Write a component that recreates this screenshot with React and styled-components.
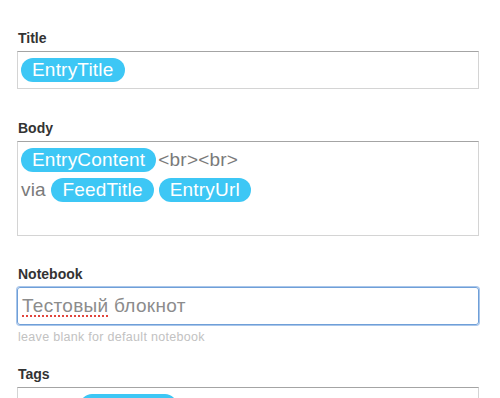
import React from "react";
import styled, { createGlobalStyle } from "styled-components";

const Global = createGlobalStyle`
  html, body { margin: 0; padding: 0; background: #fff; overflow: hidden; }
  body { font-family: "Liberation Sans", Arial, sans-serif; }
`;

const Page = styled.div`
  padding: 30px 21px 0 17px;
  display: flex;
  flex-direction: column;
`;

const Field = styled.div`
  display: flex;
  flex-direction: column;
  margin-bottom: ${(p) => p.$gap ?? 31}px;
`;

const Label = styled.div`
  font-size: 14px;
  line-height: 16px;
  font-weight: bold;
  color: #333;
  margin: 0 0 5px 1px;
`;

const Box = styled.div`
  box-sizing: border-box;
  min-height: ${(p) => p.$h}px;
  border: 1px solid #d4d4d4;
  border-top-color: #a4a4a4;
  padding: 3px 3px;
  background: #fff;
  display: flex;
  flex-direction: column;
`;

const Line = styled.div`
  display: flex;
  align-items: center;
  height: 30px;
  font-size: 19px;
  letter-spacing: 0.2px;
  color: #7a7a7a;
  white-space: pre;
`;

const Tag = styled.span`
  display: inline-flex;
  align-items: center;
  box-sizing: border-box;
  height: 24px;
  min-width: ${(p) => p.$w ?? 0}px;
  padding: 0 11px;
  border-radius: 12px;
  background: #3dc7f5;
  color: #fff;
  font-size: 19px;
  letter-spacing: 0.2px;
  margin-right: ${(p) => p.$mr ?? 3}px;
`;

const Input = styled.div`
  box-sizing: border-box;
  height: 38px;
  border: 1px solid #6f9fd8;
  box-shadow: 0 0 0 1px #a9c6ea;
  border-radius: 3px;
  padding: 0 4px;
  display: flex;
  align-items: center;
  font-size: 19px;
  letter-spacing: 0.3px;
  color: #8c8c8c;
  white-space: pre;
`;

const Misspelled = styled.span`
  text-decoration: underline dotted #e2453c;
  text-decoration-thickness: 2px;
  text-underline-offset: 3px;
`;

const Hint = styled.div`
  font-size: 12.5px;
  letter-spacing: 0.3px;
  line-height: 15px;
  color: #c2c2c2;
  margin: 5px 0 0 1px;
`;

const Spacer = styled.span`
  display: inline-block;
  width: ${(p) => p.$w}px;
`;

export default function App() {
  return (
    <>
      <Global />
      <Page>
        <Field>
          <Label>Title</Label>
          <Box $h={38}>
            <Line>
              <Tag>EntryTitle</Tag>
            </Line>
          </Box>
        </Field>
        <Field $gap={30}>
          <Label>Body</Label>
          <Box $h={95}>
            <Line>
              <Tag $mr={2}>EntryContent</Tag>&lt;br&gt;&lt;br&gt;
            </Line>
            <Line>
              via <Tag $mr={5}>FeedTitle</Tag>
              <Tag>EntryUrl</Tag>
            </Line>
          </Box>
        </Field>
        <Field $gap={21}>
          <Label>Notebook</Label>
          <Input>
            <Misspelled>Тестовый</Misspelled> блокнот
          </Input>
          <Hint>leave blank for default notebook</Hint>
        </Field>
        <Field>
          <Label>Tags</Label>
          <Box $h={38}>
            <Line>
              <Spacer $w={59} />
              <Tag $w={97} />
            </Line>
          </Box>
        </Field>
      </Page>
    </>
  );
}
